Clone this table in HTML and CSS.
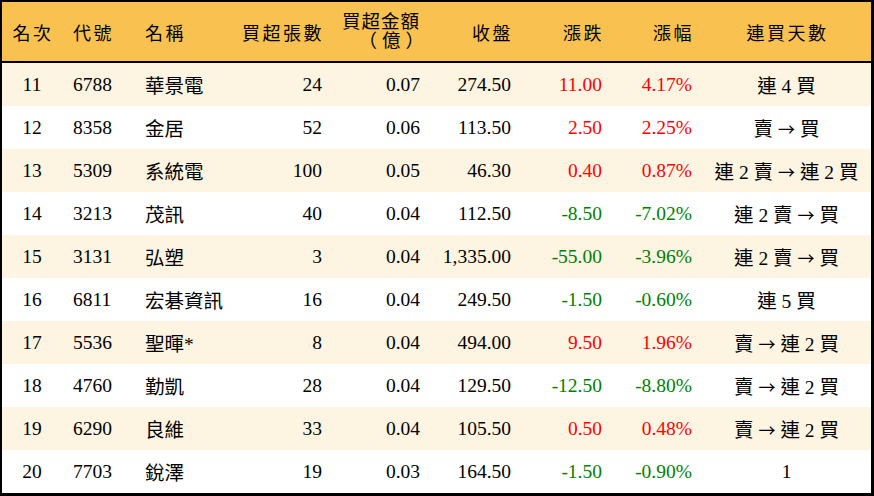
FILE: index.html
```html
<!DOCTYPE html>
<html lang="zh-Hant">
<head>
<meta charset="utf-8">
<link rel="stylesheet" href="styles.css">
</head>
<body>
<div class="frame">
<table class="rank">
<colgroup>
<col class="c1"><col class="c2"><col class="c3"><col class="c4"><col class="c5"><col class="c6"><col class="c7"><col class="c8"><col class="c9">
</colgroup>
<thead>
<tr>
<th class="ctr">名次</th>
<th class="lft">代號</th>
<th class="lft">名稱</th>
<th class="rgt">買超張數</th>
<th class="rgt two">買超金額<br><span class="unit">（億）</span></th>
<th class="rgt">收盤</th>
<th class="rgt">漲跌</th>
<th class="rgt">漲幅</th>
<th class="ctr">連買天數</th>
</tr>
</thead>
<tbody>
<tr><td class="ctr">11</td><td class="lft">6788</td><td class="lft">華景電</td><td class="rgt">24</td><td class="rgt">0.07</td><td class="rgt">274.50</td><td class="rgt up">11.00</td><td class="rgt up">4.17%</td><td class="ctr">連 4 買</td></tr>
<tr><td class="ctr">12</td><td class="lft">8358</td><td class="lft">金居</td><td class="rgt">52</td><td class="rgt">0.06</td><td class="rgt">113.50</td><td class="rgt up">2.50</td><td class="rgt up">2.25%</td><td class="ctr">賣 <span class="arw">→</span> 買</td></tr>
<tr><td class="ctr">13</td><td class="lft">5309</td><td class="lft">系統電</td><td class="rgt">100</td><td class="rgt">0.05</td><td class="rgt">46.30</td><td class="rgt up">0.40</td><td class="rgt up">0.87%</td><td class="ctr">連 2 賣 <span class="arw">→</span> 連 2 買</td></tr>
<tr><td class="ctr">14</td><td class="lft">3213</td><td class="lft">茂訊</td><td class="rgt">40</td><td class="rgt">0.04</td><td class="rgt">112.50</td><td class="rgt dn">-8.50</td><td class="rgt dn">-7.02%</td><td class="ctr">連 2 賣 <span class="arw">→</span> 買</td></tr>
<tr><td class="ctr">15</td><td class="lft">3131</td><td class="lft">弘塑</td><td class="rgt">3</td><td class="rgt">0.04</td><td class="rgt">1,335.00</td><td class="rgt dn">-55.00</td><td class="rgt dn">-3.96%</td><td class="ctr">連 2 賣 <span class="arw">→</span> 買</td></tr>
<tr><td class="ctr">16</td><td class="lft">6811</td><td class="lft">宏碁資訊</td><td class="rgt">16</td><td class="rgt">0.04</td><td class="rgt">249.50</td><td class="rgt dn">-1.50</td><td class="rgt dn">-0.60%</td><td class="ctr">連 5 買</td></tr>
<tr><td class="ctr">17</td><td class="lft">5536</td><td class="lft">聖暉*</td><td class="rgt">8</td><td class="rgt">0.04</td><td class="rgt">494.00</td><td class="rgt up">9.50</td><td class="rgt up">1.96%</td><td class="ctr">賣 <span class="arw">→</span> 連 2 買</td></tr>
<tr><td class="ctr">18</td><td class="lft">4760</td><td class="lft">勤凱</td><td class="rgt">28</td><td class="rgt">0.04</td><td class="rgt">129.50</td><td class="rgt dn">-12.50</td><td class="rgt dn">-8.80%</td><td class="ctr">賣 <span class="arw">→</span> 連 2 買</td></tr>
<tr><td class="ctr">19</td><td class="lft">6290</td><td class="lft">良維</td><td class="rgt">33</td><td class="rgt">0.04</td><td class="rgt">105.50</td><td class="rgt up">0.50</td><td class="rgt up">0.48%</td><td class="ctr">賣 <span class="arw">→</span> 連 2 買</td></tr>
<tr><td class="ctr">20</td><td class="lft">7703</td><td class="lft">銳澤</td><td class="rgt">19</td><td class="rgt">0.03</td><td class="rgt">164.50</td><td class="rgt dn">-1.50</td><td class="rgt dn">-0.90%</td><td class="ctr">1</td></tr>
</tbody>
</table>
</div>
</body>
</html>
```

FILE: styles.css
```css
html, body {
  margin: 0;
  padding: 0;
  background: #ffffff;
}
.frame {
  width: 874px;
  height: 496px;
  box-sizing: border-box;
  border-style: solid;
  border-color: #000;
  border-width: 2px 3px 3px 2px;
  overflow: hidden;
}
.rank {
  width: 869px;
  border-collapse: collapse;
  table-layout: fixed;
  font-family: "Liberation Serif", "Noto Sans CJK TC", serif;
  font-size: 19.5px;
  color: #000;
}
.c1 { width: 60px; }
.c2 { width: 72px; }
.c3 { width: 96px; }
.c4 { width: 102px; }
.c5 { width: 98px; }
.c6 { width: 91px; }
.c7 { width: 91px; }
.c8 { width: 90px; }
.c9 { width: 169px; }
.rank th {
  background: #f9c14f;
  height: 59px;
  padding: 0;
  font-weight: normal;
  font-size: 18px;
  border-bottom: 2px solid #000;
  letter-spacing: 2.5px;
  vertical-align: middle;
}
.rank th.rgt { padding-right: 8px !important; }
.rank th.ctr { padding-left: 2px; }
.rank th.two {
  line-height: 19px;
  padding-right: 10px !important;
  letter-spacing: 1px;
  font-size: 18.5px;
}
.unit {
  letter-spacing: 5px;
  margin-right: -9px;
}
.rank td {
  height: 43px;
  padding: 0;
  vertical-align: middle;
  white-space: nowrap;
}
.rank tbody tr:nth-child(odd) td {
  background: #fdf4e1;
}
.rank tbody tr:nth-child(even) td {
  background: #ffffff;
}
.ctr { text-align: center; }
.lft { text-align: left; padding-left: 11px !important; }
.rgt { text-align: right; padding-right: 10px !important; }
.arw {
  font-family: "Noto Sans CJK TC", sans-serif;
  font-size: 17px;
}
.up { color: #ff0000; }
.dn { color: #008000; }
```
